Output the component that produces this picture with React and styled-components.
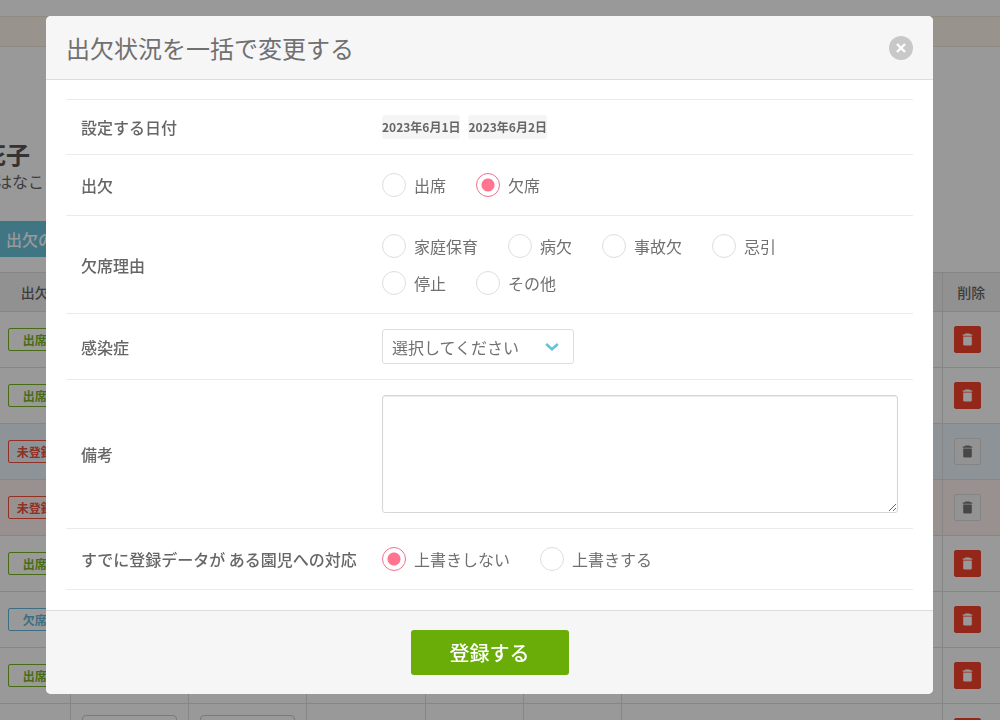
import React, { useState } from 'react';
import styled, { createGlobalStyle } from 'styled-components';

const GlobalStyle = createGlobalStyle`
  * {
    box-sizing: border-box;
  }

  body {
    margin: 0;
    color: #666;
    background: #fff;
    font-family: "Noto Sans CJK JP", "Noto Sans", sans-serif;
    font-size: 16px;
    line-height: 24px;
  }

  button, input, select, textarea {
    font: inherit;
    color: inherit;
  }
`;

const Page = styled.main`
  height: 100vh;
  overflow: hidden;
`;

const Notice = styled.div`
  height: 31px;
  margin-top: 16px;
  background: #fdf7ec;
  border: solid #f0e8d8;
  border-width: 1px 0;
`;

const Child = styled.div`
  margin: 90px 0 30px;
`;

const ChildName = styled.h1`
  margin: 0 0 0 -18px;
  font-size: 24px;
  line-height: 34px;
  color: #555;
`;

const ChildKana = styled.p`
  margin: 0 0 0 -4px;
  line-height: 20px;
`;

const BulkButton = styled.button`
  display: block;
  height: 36px;
  margin-bottom: 15px;
  padding: 0 16px 0 6px;
  border: 0;
  background: #6cc5dd;
  color: #fff;
  font-weight: 500;
`;

const Table = styled.table`
  width: 100%;
  table-layout: fixed;
  border-collapse: collapse;
`;

const HeadCell = styled.th`
  height: 39px;
  padding: 0;
  background: #f2f2f2;
  border: solid #e0e0e0;
  border-width: 1px 1px 1px 0;
  font-size: 14px;
  font-weight: 500;

  &:last-child {
    border-right: 0;
  }
`;

const rowColors = { blue: '#ebf6fb', pink: '#fff0f0' };

const BodyRow = styled.tr`
  height: 56px;
  background: ${({ $tone }) => rowColors[$tone] || '#fff'};
`;

const Cell = styled.td`
  padding: 0 11px;
  border: solid #e0e0e0;
  border-width: 0 1px 1px 0;

  &:last-child {
    border-right: 0;
  }
`;

const StatusCell = styled(Cell)`
  padding: 0 8px;
`;

const statusColors = { 出席: '#78b422', 欠席: '#64b8dc', 未登録: '#f2503f' };

const Badge = styled.span`
  display: block;
  border: 1px solid;
  border-radius: 2px;
  color: ${({ $status }) => statusColors[$status]};
  font-size: 12px;
  font-weight: 700;
  line-height: 21px;
  text-align: center;
`;

const TimeInput = styled.input`
  display: block;
  width: 100%;
  height: 34px;
  border: 1px solid #ccc;
  border-radius: 4px;
  background: #fff;
`;

const DeleteButton = styled.button`
  display: flex;
  align-items: center;
  justify-content: center;
  width: 27px;
  height: 27px;
  padding: 0;
  border: 1px solid ${({ $muted }) => ($muted ? '#ddd' : '#f5432c')};
  border-radius: 2px;
  background: ${({ $muted }) => ($muted ? '#f6f6f6' : '#f5432c')};
  color: ${({ $muted }) => ($muted ? '#777' : '#fff')};
`;

const Overlay = styled.div`
  position: fixed;
  inset: 0;
  padding: 16px 67px 26px 46px;
  background: rgba(0, 0, 0, 0.4);
`;

const Modal = styled.form`
  display: flex;
  flex-direction: column;
  overflow: hidden;
  border-radius: 5px;
  background: #fff;
`;

const ModalHeader = styled.header`
  display: flex;
  align-items: center;
  justify-content: space-between;
  height: 64px;
  padding: 0 20px;
  background: #f6f6f6;
  border-bottom: 1px solid #ddd;
`;

const Title = styled.h2`
  margin: 0;
  font-size: 24px;
  font-weight: 400;
  line-height: 36px;
  color: #707070;
`;

const CloseButton = styled.button`
  display: flex;
  padding: 0;
  border: 0;
  background: none;
`;

const ModalBody = styled.div`
  padding: 19px 20px 20px;
`;

const Rows = styled.div`
  border-top: 1px solid #ebebeb;
`;

const Row = styled.div`
  display: flex;
  align-items: center;
  padding: 15px;
  border-bottom: 1px solid #ebebeb;
`;

const RowLabel = styled.label`
  flex: 0 0 301px;
  font-weight: 500;
`;

const RowValue = styled.div`
  flex: 1;
  display: flex;
  flex-direction: column;
  gap: 7px;
  color: #707070;
`;

const Chips = styled.div`
  display: flex;
  gap: 8px;
`;

const Chip = styled.span`
  border-radius: 3px;
  background: #f5f5f5;
  font-size: 12px;
  font-weight: 700;
`;

const RadioLine = styled.div`
  display: flex;
  gap: 30px;
`;

const RadioLabel = styled.label`
  display: flex;
  align-items: center;
  gap: 8px;
  height: 30px;
`;

const RadioInput = styled.input`
  appearance: none;
  width: 24px;
  height: 24px;
  margin: 0;
  border: 1px solid #ddd;
  border-radius: 50%;
  background: #fff;

  &:checked {
    border-color: #f0708c;
    background: radial-gradient(circle, #ff7590 6px, #fff 7px);
  }
`;

const SelectBox = styled.div`
  position: relative;
  width: 192px;

  svg {
    position: absolute;
    top: 13px;
    right: 15px;
    pointer-events: none;
  }
`;

const Select = styled.select`
  display: block;
  appearance: none;
  width: 100%;
  height: 35px;
  padding: 0 32px 0 9px;
  border: 1px solid #ddd;
  border-radius: 3px;
  background: #fff;
`;

const Note = styled.textarea`
  display: block;
  width: 100%;
  height: 118px;
  padding: 8px;
  border: 1px solid #d6d6d6;
  border-radius: 3px;
  background: #fff;
  box-shadow: inset 0 1px 1px rgba(0, 0, 0, 0.08);
`;

const ModalFooter = styled.footer`
  display: flex;
  justify-content: center;
  padding: 19px 20px;
  background: #f6f6f6;
  border-top: 1px solid #ddd;
`;

const SubmitButton = styled.button`
  min-width: 158px;
  height: 45px;
  border: 0;
  border-radius: 3px;
  background: #6aad08;
  color: #fff;
  font-size: 20px;
  font-weight: 500;
`;

const TrashIcon = () => (
  <svg width="11" height="13" viewBox="0 0 11 13" fill="currentColor" aria-hidden="true">
    <path d="M3.5 0.5h4l1 0.8 1.8 0.5v1H0.7v-1l1.8-0.5z" />
    <path d="M1.2 3.6h8.6v7.6a1.4 1.4 0 0 1-1.4 1.4H2.6a1.4 1.4 0 0 1-1.4-1.4z" />
  </svg>
);

const CloseIcon = () => (
  <svg width="24" height="24" viewBox="0 0 24 24" aria-hidden="true">
    <circle cx="12" cy="12" r="12" fill="#c8c8c8" />
    <path d="M8 8l8 8M16 8l-8 8" stroke="#fff" strokeWidth="2.4" />
  </svg>
);

const ChevronIcon = () => (
  <svg width="14" height="10" viewBox="0 0 14 10" fill="none" aria-hidden="true">
    <path d="M1.2 2l5.8 5.2 5.8-5.2" stroke="#62c4d8" strokeWidth="2.6" />
  </svg>
);

const columns = [
  { key: 'status', label: '出欠', width: 70 },
  { key: 'start', label: '', width: 118 },
  { key: 'end', label: '', width: 118 },
  { key: 'reason', label: '', width: 119 },
  { key: 'illness', label: '', width: 98 },
  { key: 'bus', label: '', width: 98 },
  { key: 'note', label: '' },
  { key: 'remove', label: '削除', width: 58 },
];

const records = [
  { status: '出席' },
  { status: '出席' },
  { status: '未登録', tone: 'blue' },
  { status: '未登録', tone: 'pink' },
  { status: '出席' },
  { status: '欠席' },
  { status: '出席' },
  { status: '' },
];

const reasons = [
  ['家庭保育', '病欠', '事故欠', '忌引'],
  ['停止', 'その他'],
];

const RadioGroup = ({ name, lines, value, onChange, labelledBy }) => (
  <RowValue role="radiogroup" aria-labelledby={labelledBy}>
    {lines.map((line) => (
      <RadioLine key={line[0]}>
        {line.map((option) => (
          <RadioLabel key={option}>
            <RadioInput
              type="radio"
              name={name}
              checked={value === option}
              onChange={() => onChange(option)}
            />
            {option}
          </RadioLabel>
        ))}
      </RadioLine>
    ))}
  </RowValue>
);

const AttendanceTable = () => (
  <Table>
    <colgroup>
      {columns.map((c) => (
        <col key={c.key} width={c.width} />
      ))}
    </colgroup>
    <thead>
      <tr>
        {columns.map((c) => (
          <HeadCell key={c.key}>{c.label}</HeadCell>
        ))}
      </tr>
    </thead>
    <tbody>
      {records.map(({ status, tone }, i) => (
        <BodyRow key={i} $tone={tone}>
          <StatusCell>
            {status && <Badge $status={status}>{status}</Badge>}
          </StatusCell>
          <Cell><TimeInput aria-label="登園" /></Cell>
          <Cell><TimeInput aria-label="降園" /></Cell>
          <Cell />
          <Cell />
          <Cell />
          <Cell />
          <Cell>
            <DeleteButton type="button" aria-label="削除" $muted={Boolean(tone)}>
              <TrashIcon />
            </DeleteButton>
          </Cell>
        </BodyRow>
      ))}
    </tbody>
  </Table>
);

const BulkModal = () => {
  const [attendance, setAttendance] = useState('欠席');
  const [reason, setReason] = useState('');
  const [overwrite, setOverwrite] = useState('上書きしない');

  return (
    <Overlay>
      <Modal role="dialog" aria-labelledby="title" onSubmit={(e) => e.preventDefault()}>
        <ModalHeader>
          <Title id="title">出欠状況を一括で変更する</Title>
          <CloseButton type="button" aria-label="閉じる">
            <CloseIcon />
          </CloseButton>
        </ModalHeader>
        <ModalBody>
          <Rows>
            <Row>
              <RowLabel as="span">設定する日付</RowLabel>
              <Chips>
                <Chip>2023年6月1日</Chip>
                <Chip>2023年6月2日</Chip>
              </Chips>
            </Row>
            <Row>
              <RowLabel as="span" id="attendance">出欠</RowLabel>
              <RadioGroup
                name="attendance"
                labelledBy="attendance"
                lines={[['出席', '欠席']]}
                value={attendance}
                onChange={setAttendance}
              />
            </Row>
            <Row>
              <RowLabel as="span" id="reason">欠席理由</RowLabel>
              <RadioGroup
                name="reason"
                labelledBy="reason"
                lines={reasons}
                value={reason}
                onChange={setReason}
              />
            </Row>
            <Row>
              <RowLabel htmlFor="illness">感染症</RowLabel>
              <RowValue>
                <SelectBox>
                  <Select id="illness">
                    <option>選択してください</option>
                  </Select>
                  <ChevronIcon />
                </SelectBox>
              </RowValue>
            </Row>
            <Row>
              <RowLabel htmlFor="note">備考</RowLabel>
              <RowValue>
                <Note id="note" />
              </RowValue>
            </Row>
            <Row>
              <RowLabel as="span" id="overwrite">すでに登録データが ある園児への対応</RowLabel>
              <RadioGroup
                name="overwrite"
                labelledBy="overwrite"
                lines={[['上書きしない', '上書きする']]}
                value={overwrite}
                onChange={setOverwrite}
              />
            </Row>
          </Rows>
        </ModalBody>
        <ModalFooter>
          <SubmitButton type="submit">登録する</SubmitButton>
        </ModalFooter>
      </Modal>
    </Overlay>
  );
};

const App = () => (
  <>
    <GlobalStyle />
    <Page>
      <Notice />
      <Child>
        <ChildName>花子</ChildName>
        <ChildKana>はなこ</ChildKana>
      </Child>
      <BulkButton type="button">出欠の</BulkButton>
      <AttendanceTable />
    </Page>
    <BulkModal />
  </>
);

export default App;
